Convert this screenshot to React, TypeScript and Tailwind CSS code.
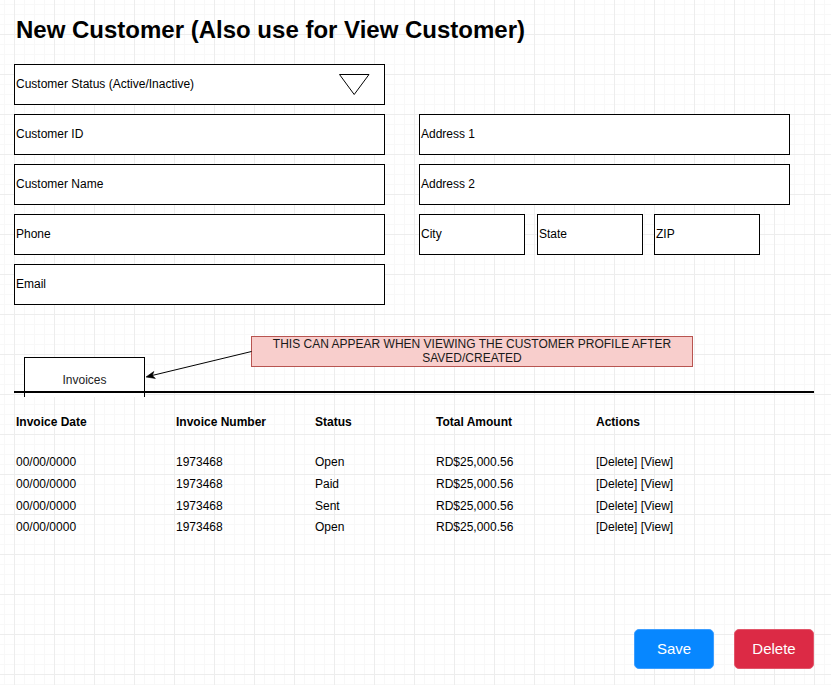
const leftFields = ["Customer ID", "Customer Name", "Phone", "Email"];

const invoices = [
	{ date: "00/00/0000", number: "1973468", status: "Open", total: "RD$25,000.56", h: "h-[22px]" },
	{ date: "00/00/0000", number: "1973468", status: "Paid", total: "RD$25,000.56", h: "h-[22px]" },
	{ date: "00/00/0000", number: "1973468", status: "Sent", total: "RD$25,000.56", h: "h-[21px]" },
	{ date: "00/00/0000", number: "1973468", status: "Open", total: "RD$25,000.56", h: "h-[22px]" },
];

function Field({ label, className = "w-[371px]" }: { label: string; className?: string }) {
	return (
		<div
			className={`flex h-[41px] items-center border border-black bg-white pb-[1px] pl-[1px] text-[12px] text-black ${className}`}
		>
			{label}
		</div>
	);
}

export default function App() {
	return (
		<div className="relative h-[685px] w-[831px] overflow-hidden bg-white bg-[linear-gradient(to_right,#ededed_1px,transparent_1px),linear-gradient(to_bottom,#ededed_1px,transparent_1px),linear-gradient(to_right,#f8f8f8_1px,transparent_1px),linear-gradient(to_bottom,#f8f8f8_1px,transparent_1px)] bg-[size:40px_40px,40px_40px,10px_10px,10px_10px] bg-[position:14px_34px] font-['Liberation_Sans',Arial,sans-serif] text-black">
			<h1 className="pl-[16px] pt-[16px] text-[24px] font-bold leading-[28px]">
				New Customer (Also use for View Customer)
			</h1>

			{/* form fields */}
			<div className="mt-[20px] flex gap-[34px] pl-[14px]">
				<div className="flex flex-col gap-[9px]">
					<div className="flex h-[41px] w-[371px] items-center justify-between border border-black bg-white pl-[1px] pr-[14px] text-[12px]">
						<span className="pb-[1px]">Customer Status (Active/Inactive)</span>
						<svg width="32" height="21" viewBox="0 0 32 21" className="shrink-0">
							<polygon points="1.5,0.5 31,0.5 16.2,20.5" fill="none" stroke="#000" strokeWidth="1" />
						</svg>
					</div>
					{leftFields.map((label) => (
						<Field key={label} label={label} />
					))}
				</div>
				<div className="mt-[50px] flex flex-col gap-[9px]">
					<Field label="Address 1" />
					<Field label="Address 2" />
					<div className="flex">
						<Field label="City" className="w-[106px]" />
						<Field label="State" className="ml-[12px] w-[106px]" />
						<Field label="ZIP" className="ml-[11px] w-[106px]" />
					</div>
				</div>
			</div>

			{/* invoices tab */}
			<div className="mt-[52px] pl-[14px]">
				<div className="ml-[10px] h-[34px] w-[121px] border border-b-0 border-black bg-white pt-[15px] text-center text-[12px] leading-[14px] text-[#222]">
					Invoices
				</div>
				<div className="h-[2px] w-[800px] bg-black" />
				<div className="ml-[10px] h-[4px] w-[121px] border-x border-black bg-white" />

				<div className="mt-[14px] grid h-[22px] grid-cols-[160px_139px_121px_160px_1fr] items-center pl-[2px] text-[12px] font-bold">
					<span>Invoice Date</span>
					<span>Invoice Number</span>
					<span>Status</span>
					<span>Total Amount</span>
					<span>Actions</span>
				</div>

				<div className="mt-[18px]">
					{invoices.map((row, i) => (
						<div
							key={i}
							className={`grid grid-cols-[160px_139px_121px_160px_1fr] items-center pl-[2px] text-[12px] ${row.h}`}
						>
							<span>{row.date}</span>
							<span>{row.number}</span>
							<span>{row.status}</span>
							<span>{row.total}</span>
							<span>[Delete] [View]</span>
						</div>
					))}
				</div>
			</div>

			{/* buttons */}
			<div className="mt-[91px] flex justify-end gap-[20px] pr-[17px]">
				<button className="h-[40px] w-[80px] rounded-[5px] border border-[#3d9eff] bg-[#0787ff] text-[15px] text-white">
					Save
				</button>
				<button className="h-[40px] w-[80px] rounded-[5px] border border-[#e2566a] bg-[#dc2a45] text-[15px] text-white">
					Delete
				</button>
			</div>

			{/* annotation note */}
			<div className="absolute left-[251px] top-[336px] h-[31px] w-[442px] border border-[#b85450] bg-[#f8cecc] text-center text-[12px] leading-[14px] text-[#1a1a1a]">
				THIS CAN APPEAR WHEN VIEWING THE CUSTOMER PROFILE AFTER SAVED/CREATED
			</div>
			<svg className="pointer-events-none absolute left-0 top-0" width="831" height="685">
				<line x1="251.5" y1="351.5" x2="152" y2="375.5" stroke="#000" strokeWidth="1" />
				<polygon points="146,377 155.4,378.4 152.3,375.6 153.8,371.5" fill="#000" stroke="#000" strokeWidth="0.6" />
			</svg>
		</div>
	);
}
